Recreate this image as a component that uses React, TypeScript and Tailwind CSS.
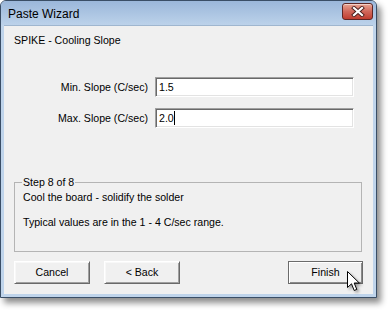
import React from "react";

const font = { fontFamily: '"Liberation Sans", Arial, sans-serif' };

function Button({ children, def }: { children: React.ReactNode; def?: boolean }) {
  return (
    <div
      className={
        "h-[23px] flex items-center justify-center text-[10.6px] leading-[13px] text-black bg-[#f0f0f0] " +
        (def
          ? "w-[75px] border border-[#6b6b6b] shadow-[inset_1px_1px_0_#ffffff,inset_-1px_-1px_0_#8a8a8a]"
          : "w-[76px] border border-t-[#ffffff] border-l-[#ffffff] border-r-[#696969] border-b-[#696969] shadow-[inset_1px_1px_0_#f8f8f8,inset_-1px_-1px_0_#a0a0a0]")
      }
    >
      {children}
    </div>
  );
}

function Field({ label, value, caret }: { label: string; value: string; caret?: boolean }) {
  return (
    <div className="flex items-center">
      <div className="w-[134px] text-right text-[10.6px] leading-[13px] text-black">{label}</div>
      <div className="ml-[7px] w-[199px] h-[20px] bg-white border border-t-[#a0a0a0] border-l-[#a0a0a0] border-b-[#ffffff] border-r-[#ffffff] shadow-[inset_1px_1px_0_#696969,inset_-1px_-1px_0_#e3e3e3] flex items-center pl-[3px] text-[10.6px] leading-[13px] text-black">
        <span>{value}</span>
        {caret && <span className="inline-block w-[1px] h-[14px] bg-black" />}
      </div>
    </div>
  );
}

export default function App() {
  return (
    <div className="relative w-[389px] h-[310px] bg-white" style={font}>
      <div className="w-[377px] h-[298px] rounded-t-[6px] border border-[#3a4e66] bg-[#bfd4eb] flex flex-col shadow-[4px_5px_6px_rgba(0,0,0,0.45)]">
        {/* title bar */}
        <div className="h-[24px] flex items-center justify-between pl-[7px] pr-[3px] rounded-t-[5px] bg-gradient-to-b from-[#9bb7da] to-[#bcd2ea]">
          <span className="text-[12px] leading-[14px] text-black mt-[1px]">Paste Wizard</span>
          <div className="w-[31px] h-[17px] mt-[-3px] rounded-[3px] border border-[#5e2624] bg-gradient-to-b from-[#e8a493] via-[#d0675a] to-[#c03c2f] shadow-[inset_0_1px_0_rgba(255,255,255,0.5)] flex items-center justify-center">
            <svg width="14" height="11" viewBox="0 0 14 11">
              <path d="M3 2 L11 9 M11 2 L3 9" stroke="#4a1f1c" strokeWidth="4" strokeLinecap="square" />
              <path d="M3 2 L11 9 M11 2 L3 9" stroke="#ffffff" strokeWidth="2.2" strokeLinecap="square" />
            </svg>
          </div>
        </div>
        {/* frame + client */}
        <div className="flex-1 px-[3px] pb-[3px] flex">
          <div className="flex-1 bg-[#f0f0f0] border-t border-[#9fb6cf] pl-[10px] pr-[10px] pt-[8px] flex flex-col">
            <div className="text-[10.6px] leading-[13px] text-black">SPIKE - Cooling Slope</div>
            <div className="mt-[30px]">
              <Field label="Min. Slope (C/sec)" value="1.5" />
            </div>
            <div className="mt-[11px]">
              <Field label="Max. Slope (C/sec)" value="2.0" caret />
            </div>
            <fieldset className="mt-[48px] w-[348px] border border-[#b4b4b4] pl-[8px] pt-[2px] pb-[22px]">
              <legend className="ml-[-1px] px-[1px] text-[10.6px] leading-[13px] text-black">Step 8 of 8</legend>
              <div className="text-[10.6px] leading-[13px] text-black">Cool the board - solidify the solder</div>
              <div className="mt-[12px] text-[10.6px] leading-[13px] text-black">
                Typical values are in the 1 - 4 C/sec range.
              </div>
            </fieldset>
            <div className="mt-[9px] flex">
              <Button>Cancel</Button>
              <div className="ml-[14px]">
                <Button>&lt; Back</Button>
              </div>
              <div className="ml-auto">
                <Button def>Finish</Button>
              </div>
            </div>
          </div>
        </div>
      </div>
      {/* mouse cursor */}
      <svg
        className="absolute left-[347px] top-[271px]"
        width="14"
        height="22"
        viewBox="0 0 14 22"
        style={{ filter: "drop-shadow(2px 2px 1.5px rgba(0,0,0,0.35))" }}
      >
        <path d="M0.5 0.5 L0.5 16.5 L4.5 12.8 L7.2 19.5 L9.8 18.4 L7.2 12 L12.3 12 Z" fill="#ffffff" stroke="#000000" strokeWidth="1" />
      </svg>
    </div>
  );
}
